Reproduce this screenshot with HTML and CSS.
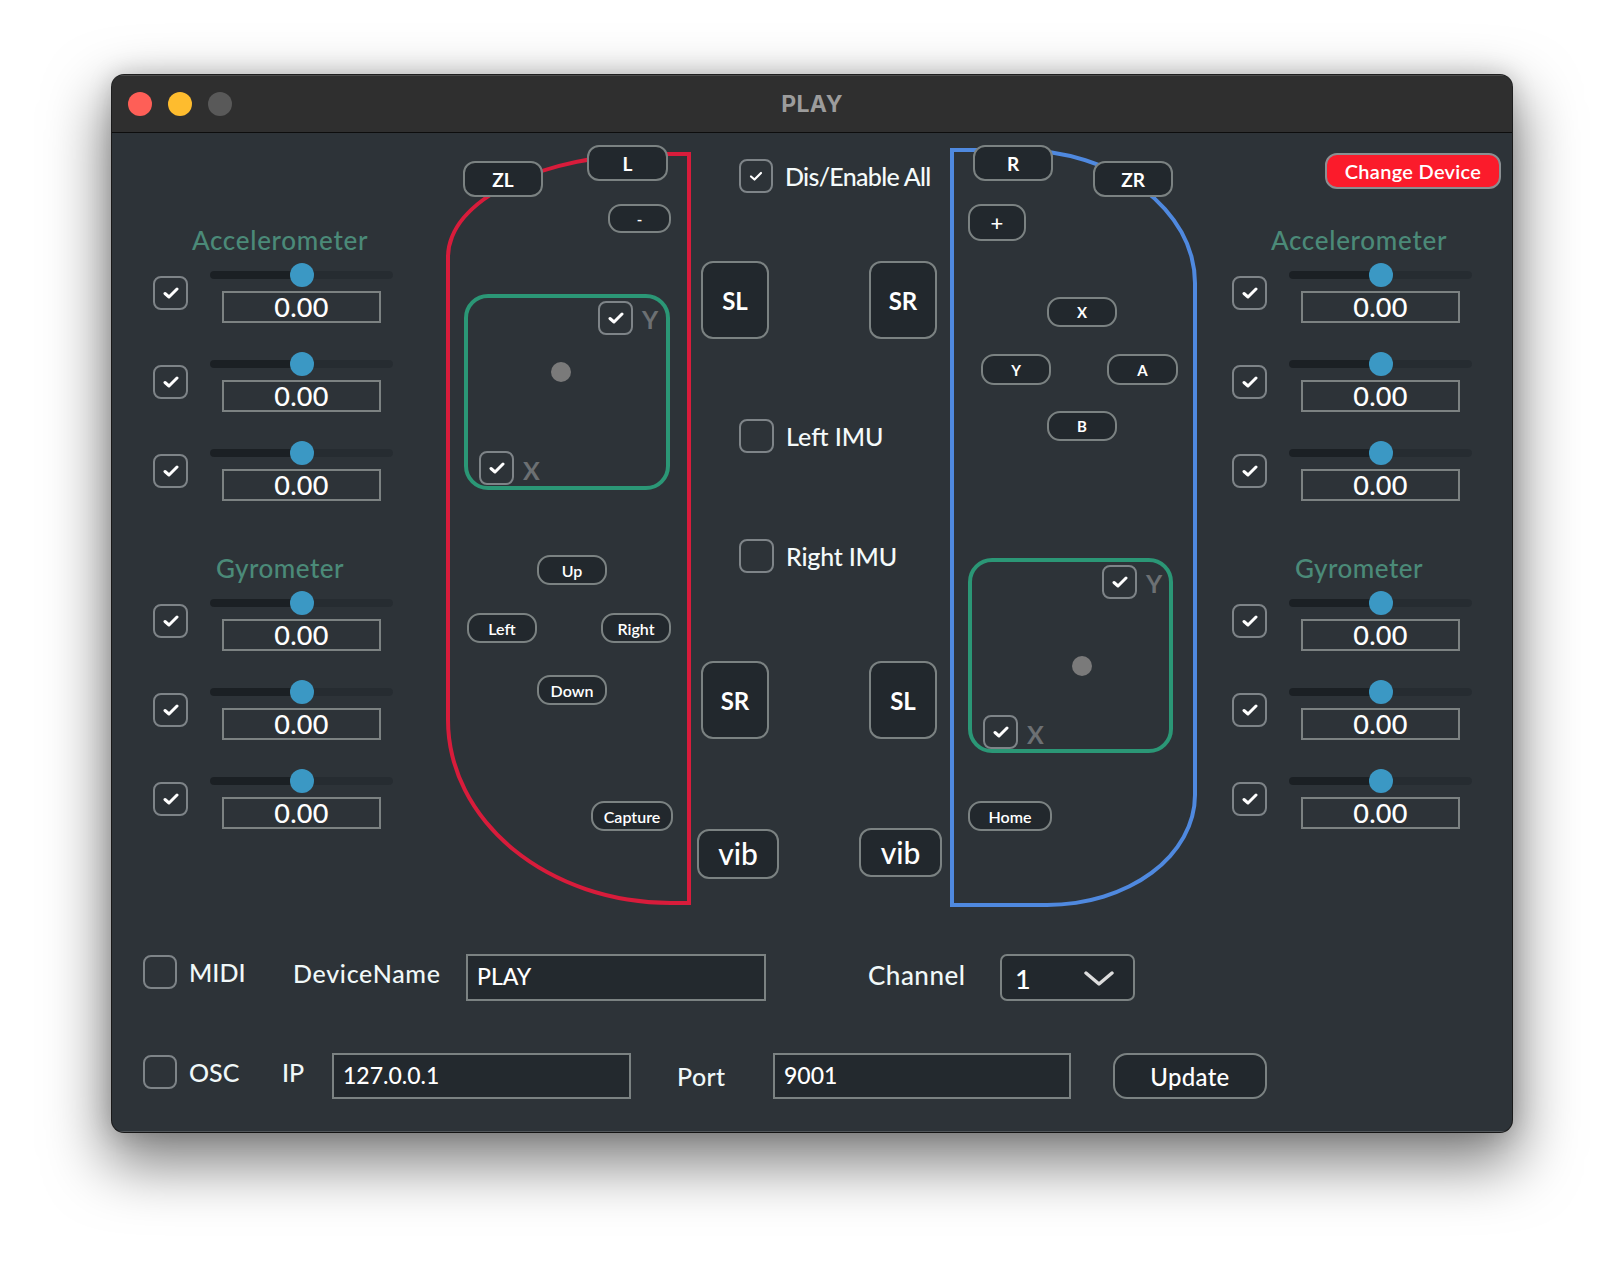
FILE: index.html
```html
<!DOCTYPE html>
<html lang="en">
<head>
<meta charset="utf-8">
<title>PLAY</title>
<link rel="stylesheet" href="styles.css">
</head>
<body>
<div class="stage">
  <div class="window">
    <div class="titlebar">
      <div class="lights"><span class="light red"></span><span class="light yellow"></span><span class="light grey"></span></div>
      <div class="title">PLAY</div>
      <div></div>
    </div>
    <div class="content">
      <div class="top">
        <!-- left sensors -->
        <div class="sensors sensors-left">
          <div class="group-label">Accelerometer</div>
          <div class="rows">
            <div class="row"><span class="cb"><svg class="tick" viewBox="0 0 16 12"><path d="M2 6.5 L6 10 L14 2"/></svg></span><div class="stack"><div class="slider"><div class="track"></div><span class="thumb"></span></div><div class="value">0.00</div></div></div>
            <div class="row"><span class="cb"><svg class="tick" viewBox="0 0 16 12"><path d="M2 6.5 L6 10 L14 2"/></svg></span><div class="stack"><div class="slider"><div class="track"></div><span class="thumb"></span></div><div class="value">0.00</div></div></div>
            <div class="row"><span class="cb"><svg class="tick" viewBox="0 0 16 12"><path d="M2 6.5 L6 10 L14 2"/></svg></span><div class="stack"><div class="slider"><div class="track"></div><span class="thumb"></span></div><div class="value">0.00</div></div></div>
          </div>
          <div class="group-label gyro">Gyrometer</div>
          <div class="rows">
            <div class="row"><span class="cb"><svg class="tick" viewBox="0 0 16 12"><path d="M2 6.5 L6 10 L14 2"/></svg></span><div class="stack"><div class="slider"><div class="track"></div><span class="thumb"></span></div><div class="value">0.00</div></div></div>
            <div class="row"><span class="cb"><svg class="tick" viewBox="0 0 16 12"><path d="M2 6.5 L6 10 L14 2"/></svg></span><div class="stack"><div class="slider"><div class="track"></div><span class="thumb"></span></div><div class="value">0.00</div></div></div>
            <div class="row"><span class="cb"><svg class="tick" viewBox="0 0 16 12"><path d="M2 6.5 L6 10 L14 2"/></svg></span><div class="stack"><div class="slider"><div class="track"></div><span class="thumb"></span></div><div class="value">0.00</div></div></div>
          </div>
        </div>

        <!-- controller canvas -->
        <div class="canvas">
          <div class="outline outline-left"></div>
          <div class="outline outline-right"></div>

          <span class="btn btn-lg b-zl">ZL</span>
          <span class="btn btn-lg b-l">L</span>
          <span class="btn btn-sm b-minus">-</span>

          <div class="pad pad-left">
            <div class="axis axis-y"><span class="cb"><svg class="tick" viewBox="0 0 16 12"><path d="M2 6.5 L6 10 L14 2"/></svg></span><span class="axis-letter">Y</span></div>
            <div class="axis axis-x"><span class="cb"><svg class="tick" viewBox="0 0 16 12"><path d="M2 6.5 L6 10 L14 2"/></svg></span><span class="axis-letter">X</span></div>
            <span class="dot dot-left"></span>
          </div>

          <span class="btn btn-sm b-up">Up</span>
          <span class="btn btn-sm b-left">Left</span>
          <span class="btn btn-sm b-right">Right</span>
          <span class="btn btn-sm b-down">Down</span>
          <span class="btn btn-sm b-capture">Capture</span>

          <div class="opt opt-all"><span class="cb cb-small"><svg class="tick tick-small" viewBox="0 0 16 12"><path d="M3 6.5 L6.5 9.5 L13 3"/></svg></span><span class="all-text">Dis/Enable All</span></div>
          <div class="opt opt-limu"><span class="cb"></span><span>Left IMU</span></div>
          <div class="opt opt-rimu"><span class="cb"></span><span>Right IMU</span></div>

          <span class="btn btn-side b-sl1">SL</span>
          <span class="btn btn-side b-sr1">SR</span>
          <span class="btn btn-side b-sr2">SR</span>
          <span class="btn btn-side b-sl2">SL</span>
          <span class="btn btn-vib b-vib1">vib</span>
          <span class="btn btn-vib b-vib2">vib</span>

          <span class="btn btn-lg b-r">R</span>
          <span class="btn btn-lg b-zr">ZR</span>
          <span class="btn btn-sm b-plus">+</span>
          <span class="btn btn-sm btn-face b-x">X</span>
          <span class="btn btn-sm btn-face b-y">Y</span>
          <span class="btn btn-sm btn-face b-a">A</span>
          <span class="btn btn-sm btn-face b-b">B</span>

          <div class="pad pad-right">
            <div class="axis axis-y"><span class="cb"><svg class="tick" viewBox="0 0 16 12"><path d="M2 6.5 L6 10 L14 2"/></svg></span><span class="axis-letter">Y</span></div>
            <div class="axis axis-x"><span class="cb"><svg class="tick" viewBox="0 0 16 12"><path d="M2 6.5 L6 10 L14 2"/></svg></span><span class="axis-letter">X</span></div>
            <span class="dot dot-right"></span>
          </div>

          <span class="btn btn-sm b-home">Home</span>
        </div>

        <!-- right sensors -->
        <div class="sensors sensors-right">
          <button class="change">Change Device</button>
          <div class="group-label">Accelerometer</div>
          <div class="rows">
            <div class="row"><span class="cb"><svg class="tick" viewBox="0 0 16 12"><path d="M2 6.5 L6 10 L14 2"/></svg></span><div class="stack"><div class="slider"><div class="track"></div><span class="thumb"></span></div><div class="value">0.00</div></div></div>
            <div class="row"><span class="cb"><svg class="tick" viewBox="0 0 16 12"><path d="M2 6.5 L6 10 L14 2"/></svg></span><div class="stack"><div class="slider"><div class="track"></div><span class="thumb"></span></div><div class="value">0.00</div></div></div>
            <div class="row"><span class="cb"><svg class="tick" viewBox="0 0 16 12"><path d="M2 6.5 L6 10 L14 2"/></svg></span><div class="stack"><div class="slider"><div class="track"></div><span class="thumb"></span></div><div class="value">0.00</div></div></div>
          </div>
          <div class="group-label gyro">Gyrometer</div>
          <div class="rows">
            <div class="row"><span class="cb"><svg class="tick" viewBox="0 0 16 12"><path d="M2 6.5 L6 10 L14 2"/></svg></span><div class="stack"><div class="slider"><div class="track"></div><span class="thumb"></span></div><div class="value">0.00</div></div></div>
            <div class="row"><span class="cb"><svg class="tick" viewBox="0 0 16 12"><path d="M2 6.5 L6 10 L14 2"/></svg></span><div class="stack"><div class="slider"><div class="track"></div><span class="thumb"></span></div><div class="value">0.00</div></div></div>
            <div class="row"><span class="cb"><svg class="tick" viewBox="0 0 16 12"><path d="M2 6.5 L6 10 L14 2"/></svg></span><div class="stack"><div class="slider"><div class="track"></div><span class="thumb"></span></div><div class="value">0.00</div></div></div>
          </div>
        </div>
      </div>

      <div class="bottom-row row-midi">
        <span class="cb cb-plain"></span>
        <span class="lbl w-midi">MIDI</span>
        <span class="lbl w-devname">DeviceName</span>
        <div class="field w-300">PLAY</div>
        <span class="lbl w-channel">Channel</span>
        <div class="select"><span>1</span><svg class="chev" viewBox="0 0 30 16"><path d="M2 2 L15 13 L28 2"/></svg></div>
      </div>

      <div class="bottom-row row-osc">
        <span class="cb cb-plain"></span>
        <span class="lbl w-osc">OSC</span>
        <span class="lbl w-ip">IP</span>
        <div class="field w-ipfield">127.0.0.1</div>
        <span class="lbl w-port">Port</span>
        <div class="field w-portfield">9001</div>
        <button class="update">Update</button>
      </div>
    </div>
  </div>
</div>
</body>
</html>
```

FILE: styles.css
```css
* { box-sizing: border-box; }
html, body { margin: 0; padding: 0; }
body {
  background: #ffffff;
  font-family: Lato, "Open Sans", "DejaVu Sans", sans-serif;
  font-weight: 500;
  width: 1624px;
  height: 1280px;
  overflow: hidden;
}

.stage { padding: 75px 0 0 112px; }

.window {
  width: 1400px;
  height: 1057px;
  border-radius: 12px;
  overflow: hidden;
  background: #2d3338;
  display: flex;
  flex-direction: column;
  box-shadow:
    0 0 0 1px rgba(0, 0, 0, 0.85),
    0 26px 60px 6px rgba(0, 0, 0, 0.5),
    0 0 24px rgba(0, 0, 0, 0.18);
}

/* title bar */
.titlebar {
  height: 58px;
  flex: none;
  background: #2f2f2f;
  border-bottom: 1px solid #0d0d0d;
  display: grid;
  grid-template-columns: 1fr auto 1fr;
  align-items: center;
  box-shadow: inset 0 1px 0 rgba(255, 255, 255, 0.14);
}
.lights { display: flex; gap: 16px; padding-left: 16px; }
.light { width: 24px; height: 24px; border-radius: 50%; display: block; }
.red { background: #fe5f57; }
.yellow { background: #febc2e; }
.grey { background: #595959; }
.title {
  font-family: Inter, "Open Sans", sans-serif;
  font-weight: 700;
  font-size: 23px;
  color: #9c9c9c;
  letter-spacing: 0.4px;
}

/* content */
.content {
  flex: 1;
  display: flex;
  flex-direction: column;
  box-shadow: inset 0 -1px 0 rgba(255, 255, 255, 0.18);
}
.top { height: 821px; flex: none; display: flex; }

/* sensor columns */
.sensors { width: 300px; flex: none; }
.sensors-left { padding: 92px 0 0 41px; }
.sensors-right { padding: 20px 0 0 20px; }

.group-label {
  width: 240px;
  padding-left: 14px;
  text-align: center;
  font-size: 26px;
  line-height: 30px;
  height: 30px;
  color: #4b8a78;
  letter-spacing: 0.7px;
  white-space: nowrap;
}
.group-label.gyro { margin-top: 52px; letter-spacing: 0.5px; }
.rows { display: flex; flex-direction: column; gap: 29px; margin-top: 8px; }
.row { display: flex; align-items: center; gap: 22px; height: 60px; }

.cb {
  width: 35px;
  height: 34px;
  flex: none;
  border: 2px solid #7e8488;
  border-radius: 8px;
  display: flex;
  align-items: center;
  justify-content: center;
}
.tick { width: 16px; height: 12px; display: block; }
.tick path { fill: none; stroke: #ffffff; stroke-width: 3; stroke-linecap: round; stroke-linejoin: round; }
.tick-small path { stroke-width: 2.2; }

.stack { width: 183px; display: flex; flex-direction: column; align-items: center; gap: 4px; }
.slider { width: 183px; height: 24px; position: relative; display: flex; align-items: center; }
.track {
  width: 100%;
  height: 8px;
  border-radius: 4px;
  background: linear-gradient(to right, #1b2024 0, #1b2024 50%, #262c31 50%, #262c31 100%);
}
.thumb {
  position: absolute;
  left: 80px;
  top: 0;
  width: 24px;
  height: 24px;
  border-radius: 50%;
  background: #3b98c4;
}
.value {
  width: 159px;
  height: 32px;
  border: 2px solid #7c8282;
  color: #ffffff;
  font-size: 27px;
  line-height: 27px;
  text-align: center;
  letter-spacing: 0.3px;
}

.change {
  display: block;
  margin: 0 0 36px 93px;
  width: 176px;
  height: 36px;
  border: 2px solid #8a8f92;
  border-radius: 12px;
  background: #fb1b2b;
  color: #ffffff;
  font-family: Lato, sans-serif;
  font-weight: 600;
  font-size: 20px;
  letter-spacing: 0.3px;
  padding: 0;
}

/* controller canvas */
.canvas { position: relative; width: 800px; flex: none; }

.outline { position: absolute; }
.outline-left {
  left: 34px; top: 19px; width: 245px; height: 753px;
  border: 4px solid #d81c3b;
  border-radius: 210px 0 0 225px / 105px 0 0 185px;
}
.outline-right {
  left: 538px; top: 15px; width: 247px; height: 759px;
  border: 4px solid #4f89df;
  border-radius: 0 180px 150px 0 / 0 135px 112px 0;
}

.btn {
  position: absolute;
  display: flex;
  align-items: center;
  justify-content: center;
  background: #22282d;
  border: 2px solid #7b8282;
  color: #ffffff;
  font-weight: 700;
}
.btn-lg { width: 80px; height: 36px; border-radius: 12px; font-size: 19px; }
.btn-sm { width: 70px; height: 30px; border-radius: 13px; font-size: 16px; font-weight: 600; }
.btn-face { font-size: 15px; font-weight: 700; }
.btn-side { width: 68px; height: 78px; border-radius: 12px; font-size: 24px; }
.btn-vib { width: 82px; height: 50px; border-radius: 12px; font-size: 30px; font-weight: 500; padding-bottom: 2px; }

.b-zl { left: 51px; top: 28px; }
.b-l { left: 175px; top: 12px; width: 81px; }
.b-minus { left: 196px; top: 71px; width: 63px; height: 29px; font-size: 15px; }
.b-up { left: 125px; top: 422px; }
.b-left { left: 55px; top: 480px; }
.b-right { left: 189px; top: 480px; }
.b-down { left: 125px; top: 542px; }
.b-capture { left: 179px; top: 668px; width: 82px; }
.b-sl1 { left: 289px; top: 128px; }
.b-sr1 { left: 457px; top: 128px; }
.b-sr2 { left: 289px; top: 528px; }
.b-sl2 { left: 457px; top: 528px; }
.b-vib1 { left: 285px; top: 696px; }
.b-vib2 { left: 447px; top: 695px; width: 83px; height: 49px; }
.b-r { left: 561px; top: 12px; }
.b-zr { left: 681px; top: 28px; }
.b-plus { left: 556px; top: 71px; width: 58px; height: 37px; font-size: 22px; font-weight: 500; }
.b-x { left: 635px; top: 164px; }
.b-y { left: 569px; top: 221px; height: 31px; }
.b-a { left: 695px; top: 221px; width: 71px; height: 31px; }
.b-b { left: 635px; top: 278px; }
.b-home { left: 556px; top: 668px; width: 84px; }

.pad {
  position: absolute;
  border: 4px solid #2b9776;
  border-radius: 24px;
}
.pad-left { left: 52px; top: 161px; width: 206px; height: 196px; }
.pad-right { left: 556px; top: 425px; width: 205px; height: 195px; }
.axis { position: absolute; display: flex; align-items: center; gap: 9px; }
.axis-y { left: 130px; top: 3px; }
.axis-x { left: 11px; top: 153px; }
.axis-letter { color: #6c7073; font-weight: 700; font-size: 25px; line-height: 30px; padding-top: 4px; }
.axis-y .axis-letter { padding-top: 2px; }
.dot { position: absolute; width: 20px; height: 20px; border-radius: 50%; background: #7a7a7a; }
.dot-left { left: 83px; top: 64px; }
.dot-right { left: 100px; top: 94px; }

.opt {
  position: absolute;
  left: 327px;
  display: flex;
  align-items: center;
  gap: 12px;
  color: #f4fafa;
  font-size: 25px;
  line-height: 30px;
}
.all-text { letter-spacing: -0.7px; }
.opt-all { top: 26px; }
.opt-limu { top: 286px; }
.opt-rimu { top: 406px; }
.opt-rimu span:last-child { letter-spacing: -0.2px; }
.cb-small { width: 34px; }

/* bottom rows */
.bottom-row { display: flex; align-items: flex-start; padding-left: 31px; flex: none; }
.row-midi { height: 47px; }
.row-osc { height: 46px; margin-top: 52px; }
.cb-plain { width: 34px; height: 34px; margin-top: 1px; }
.row-osc .cb-plain { margin-top: 2px; }

.lbl {
  flex: none;
  color: #f0f8f8;
  font-size: 25px;
  line-height: 30px;
  margin-top: 3px;
  white-space: nowrap;
}
.w-midi { margin-left: 12px; width: 104px; }
.w-devname { width: 173px; margin-top: 4px; letter-spacing: 0.7px; }
.w-channel { margin-left: 102px; width: 132px; margin-top: 6px; font-size: 26px; letter-spacing: 0.5px; }
.w-osc { margin-left: 12px; width: 93px; margin-top: 4px; }
.w-ip { width: 50px; margin-top: 4px; }
.w-port { margin-left: 46px; width: 96px; margin-top: 8px; letter-spacing: 0.4px; }

.field {
  flex: none;
  height: 100%;
  background: #23292e;
  border: 2px solid #7b8282;
  color: #ffffff;
  font-size: 23px;
  line-height: 41px;
  padding-left: 9px;
}
.w-300 { width: 300px; }
.w-ipfield { width: 299px; }
.w-portfield { width: 298px; }

.select {
  flex: none;
  width: 135px;
  height: 47px;
  background: #22282d;
  border: 2px solid #7b8282;
  border-radius: 7px;
  display: flex;
  align-items: center;
  padding-left: 13px;
  color: #ffffff;
  font-size: 27px;
}
.select span { width: 69px; padding-top: 2px; }
.chev { width: 30px; height: 16px; display: block; margin-top: 2px; }
.chev path { fill: none; stroke: #dddddd; stroke-width: 3.4; stroke-linecap: round; stroke-linejoin: round; }

.update {
  flex: none;
  margin-left: 42px;
  width: 154px;
  height: 46px;
  background: #22282d;
  border: 2px solid #7b8282;
  border-radius: 14px;
  color: #ffffff;
  font-family: Lato, sans-serif;
  font-size: 24px;
  font-weight: 500;
  letter-spacing: 0.3px;
  padding: 0;
}
```
